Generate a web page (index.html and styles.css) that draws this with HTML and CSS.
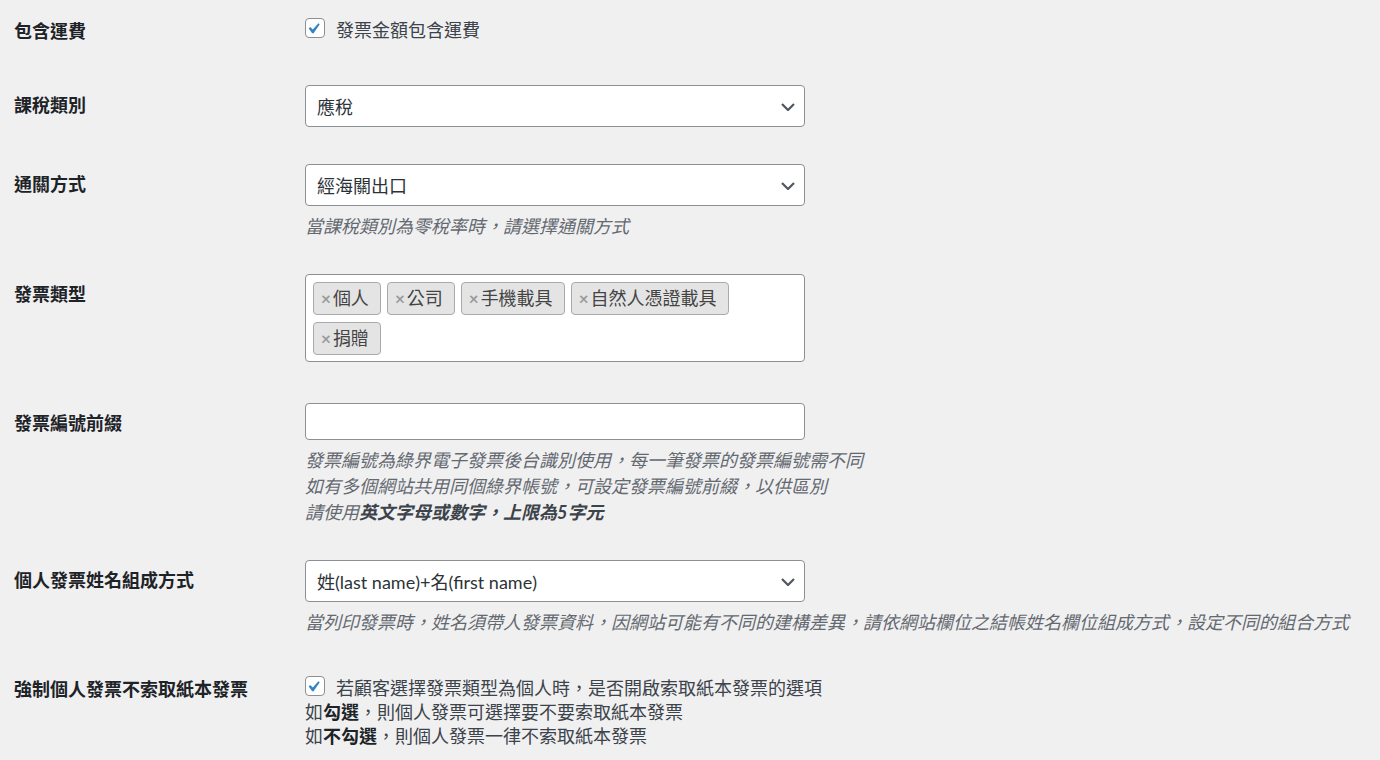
FILE: index.html
```html
<!DOCTYPE html>
<html lang="zh-Hant">
<head>
  <meta charset="UTF-8">
  <meta name="viewport" content="width=device-width, initial-scale=1.0">
  <title>電子發票設定</title>
  <link rel="stylesheet" href="styles.css">
</head>
<body>

  <div class="form-table">

    <div class="row row-first row-check">
      <div class="th">包含運費</div>
      <div class="td">
        <label class="check-line">
          <span class="checkbox"><svg viewBox="3.2 0.8 17 17" width="18" height="18"><path d="M14.83 4.89l1.34.94-5.81 8.38H9.02L5.78 9.67l1.34-1.25 2.57 2.4z" fill="#3582c4"/></svg></span>
          <span>發票金額包含運費</span>
        </label>
      </div>
    </div>

    <div class="row">
      <div class="th">課稅類別</div>
      <div class="td">
        <div class="select select-last">
          <span>應稅</span>
          <svg class="chevron" viewBox="0 0 14 8" width="14" height="8"><path d="M1 1l6 6 6-6" fill="none" stroke="#50575e" stroke-width="2.2"/></svg>
        </div>
      </div>
    </div>

    <div class="row">
      <div class="th">通關方式</div>
      <div class="td">
        <div class="select">
          <span>經海關出口</span>
          <svg class="chevron" viewBox="0 0 14 8" width="14" height="8"><path d="M1 1l6 6 6-6" fill="none" stroke="#50575e" stroke-width="2.2"/></svg>
        </div>
        <p class="description">當課稅類別為零稅率時，請選擇通關方式</p>
      </div>
    </div>

    <div class="row">
      <div class="th">發票類型</div>
      <div class="td">
        <ul class="tags">
          <li class="tag"><span class="tag-remove">×</span>個人</li>
          <li class="tag"><span class="tag-remove">×</span>公司</li>
          <li class="tag"><span class="tag-remove">×</span>手機載具</li>
          <li class="tag"><span class="tag-remove">×</span>自然人憑證載具</li>
          <li class="tag"><span class="tag-remove">×</span>捐贈</li>
        </ul>
      </div>
    </div>

    <div class="row">
      <div class="th">發票編號前綴</div>
      <div class="td">
        <div class="text-input"></div>
        <p class="description">
          發票編號為綠界電子發票後台識別使用，每一筆發票的發票編號需不同<br>
          如有多個網站共用同個綠界帳號，可設定發票編號前綴，以供區別<br>
          請使用<strong>英文字母或數字，上限為5字元</strong>
        </p>
      </div>
    </div>

    <div class="row">
      <div class="th">個人發票姓名組成方式</div>
      <div class="td">
        <div class="select">
          <span>姓(last name)+名(first name)</span>
          <svg class="chevron" viewBox="0 0 14 8" width="14" height="8"><path d="M1 1l6 6 6-6" fill="none" stroke="#50575e" stroke-width="2.2"/></svg>
        </div>
        <p class="description">當列印發票時，姓名須帶人發票資料，因網站可能有不同的建構差異，請依網站欄位之結帳姓名欄位組成方式，設定不同的組合方式</p>
      </div>
    </div>

    <div class="row row-check">
      <div class="th">強制個人發票不索取紙本發票</div>
      <div class="td">
        <label class="check-line">
          <span class="checkbox"><svg viewBox="3.2 0.8 17 17" width="18" height="18"><path d="M14.83 4.89l1.34.94-5.81 8.38H9.02L5.78 9.67l1.34-1.25 2.57 2.4z" fill="#3582c4"/></svg></span>
          <span>若顧客選擇發票類型為個人時，是否開啟索取紙本發票的選項</span>
        </label>
        <div class="check-note">如<strong>勾選</strong>，則個人發票可選擇要不要索取紙本發票</div>
        <div class="check-note">如<strong>不勾選</strong>，則個人發票一律不索取紙本發票</div>
      </div>
    </div>

  </div>

</body>
</html>
```

FILE: styles.css
```css
body {
  margin: 0;
  background: #f0f0f1;
  color: #3c434a;
  font-family: Lato, "Noto Sans CJK TC", sans-serif;
  font-size: 18px;
}
.form-table {
  display: flex;
  flex-direction: column;
}
.row {
  display: flex;
  align-items: flex-start;
  padding-top: 35px;
}
.row-first {
  padding-top: 12px;
}
.th {
  width: 305px;
  box-sizing: border-box;
  padding: 7px 0 0 14px;
  font-weight: 600;
  line-height: 26px;
  color: #1d2327;
  flex-shrink: 0;
}
.row-check .th {
  padding-top: 6px;
}
.td {
  width: 500px;
}
.row-check .td {
  padding: 6px 0 8px;
  width: auto;
}
.check-line {
  display: flex;
  align-items: flex-start;
  line-height: 24px;
  color: #3c434a;
}
.checkbox {
  width: 20px;
  height: 20px;
  box-sizing: border-box;
  border: 1px solid #8c8f94;
  border-radius: 4px;
  background: #fff;
  margin-right: 11px;
  flex-shrink: 0;
}
.checkbox svg {
  display: block;
}
.check-note {
  line-height: 24px;
  color: #3c434a;
}
.check-note strong {
  color: #1d2327;
}
.select {
  height: 42px;
  box-sizing: border-box;
  border: 1px solid #8c8f94;
  border-radius: 4px;
  background: #fff;
  display: flex;
  align-items: center;
  justify-content: space-between;
  padding: 0 9px 0 11px;
  color: #2c3338;
}
.select-last {
  margin-bottom: 2px;
}
.chevron {
  display: block;
  margin-top: 2px;
}
.text-input {
  height: 37px;
  box-sizing: border-box;
  border: 1px solid #8c8f94;
  border-radius: 4px;
  background: #fff;
}
.description {
  margin: 7px 0 0;
  line-height: 26px;
  font-style: italic;
  color: #646970;
  white-space: nowrap;
}
.description strong {
  color: #3c434a;
}
.tags {
  list-style: none;
  margin: 0 0 6px;
  height: 88px;
  box-sizing: border-box;
  border: 1px solid #8c8f94;
  border-radius: 4px;
  background: #fff;
  padding: 7px 7px 0;
  display: flex;
  flex-wrap: wrap;
  align-content: flex-start;
  gap: 7px 6px;
}
.tag {
  height: 33px;
  box-sizing: border-box;
  border: 1px solid #aaa;
  border-radius: 4px;
  background: #e4e4e4;
  padding: 0 11px 0 7px;
  line-height: 31px;
  color: #444;
}
.tag-remove {
  color: #999;
  font-weight: bold;
  font-size: 17px;
  margin-right: 2px;
}
```
